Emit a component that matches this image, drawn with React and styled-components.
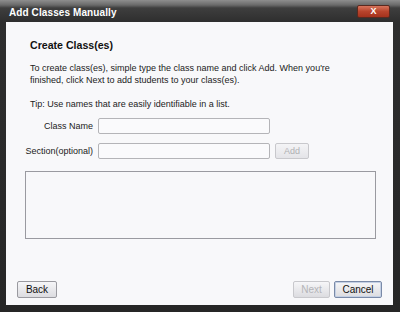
import React from "react";
import styled, { createGlobalStyle } from "styled-components";

const Global = createGlobalStyle`
  html, body { margin: 0; padding: 0; background: #ffffff; }
  body { font-family: "Liberation Sans", Arial, sans-serif; }
`;

const Window = styled.div`
  width: 400px;
  height: 312px;
  box-sizing: border-box;
  display: flex;
  flex-direction: column;
  background: linear-gradient(#8e8e8e 0px, #6a6a6a 5px, #3e3e3e 8px, #2e2e2e 22px, #262626 100%);
  padding: 0 7px 7px 6px;
`;

const TitleBar = styled.div`
  height: 22px;
  display: flex;
  align-items: center;
  justify-content: space-between;
  padding: 2px 3px 0 3px;
  box-sizing: border-box;
`;

const Title = styled.span`
  color: #ffffff;
  font-weight: bold;
  font-size: 10px;
  letter-spacing: 0.1px;
`;

const CloseButton = styled.div`
  width: 33px;
  height: 13px;
  margin-top: -2px;
  box-sizing: border-box;
  border: 1px solid #5a2a20;
  border-radius: 2px;
  background: linear-gradient(#d7745c, #b8442c 50%, #a5321d);
  display: flex;
  align-items: center;
  justify-content: center;
  color: #ffffff;
  font-size: 9px;
  font-weight: bold;
`;

const Content = styled.div`
  flex: 1;
  background: #f8f8fa;
  display: flex;
  flex-direction: column;
  padding: 16px 11px 6px 19px;
  box-sizing: border-box;
`;

const Heading = styled.h1`
  margin: 0 0 0 5px;
  font-size: 10.6px;
  line-height: 14px;
  font-weight: bold;
  color: #111111;
`;

const Paragraph = styled.p`
  margin: ${(p) => p.$top}px 0 0 5px;
  font-size: 9px;
  line-height: 12px;
  color: #222222;
`;

const FormRow = styled.div`
  display: flex;
  align-items: center;
  margin-top: ${(p) => p.$top}px;
  height: 16px;
`;

const Label = styled.label`
  width: 68px;
  text-align: right;
  font-size: 9px;
  color: #222222;
  margin-right: 5px;
  white-space: nowrap;
`;

const TextInput = styled.div`
  width: 172px;
  height: 16px;
  box-sizing: border-box;
  border: 1px solid #b4b4b8;
  border-radius: 2px;
  background: #fafafc;
`;

const SmallButton = styled.div`
  width: 34px;
  height: 16px;
  margin-left: 5px;
  box-sizing: border-box;
  border: 1px solid #c8c8cc;
  border-radius: 2px;
  background: linear-gradient(#f4f4f6, #e4e4e8);
  color: #b0b0b4;
  font-size: 9px;
  display: flex;
  align-items: center;
  justify-content: center;
`;

const ListBox = styled.div`
  margin: 12px 0 0 0;
  width: 351px;
  height: 68px;
  box-sizing: border-box;
  border: 1px solid #9a9aa0;
  background: #f8f8fa;
`;

const Footer = styled.div`
  margin-top: auto;
  display: flex;
  align-items: center;
  margin-left: -8px;
  margin-bottom: 1px;
`;

const Spacer = styled.div`
  flex: 1;
`;

const Button = styled.div`
  width: ${(p) => p.$w}px;
  height: 17px;
  box-sizing: border-box;
  margin-left: ${(p) => p.$ml || 0}px;
  border: 1px solid ${(p) => (p.$focus ? "#7a8aa8" : p.$disabled ? "#c8c8cc" : "#9a9aa0")};
  border-radius: 2px;
  background: linear-gradient(#f6f6f8, #dcdce0);
  color: ${(p) => (p.$disabled ? "#b4b4b8" : "#111111")};
  font-size: 10px;
  display: flex;
  align-items: center;
  justify-content: center;
  box-shadow: ${(p) => (p.$focus ? "inset 0 0 0 1px #c4d0e4" : "none")};
`;

export default function App() {
  return (
    <>
      <Global />
      <Window>
        <TitleBar>
          <Title>Add Classes Manually</Title>
          <CloseButton>X</CloseButton>
        </TitleBar>
        <Content>
          <Heading>Create Class(es)</Heading>
          <Paragraph $top={10}>
            To create class(es), simple type the class name and click Add. When you're
            <br />
            finished, click Next to add students to your class(es).
          </Paragraph>
          <Paragraph $top={12}>Tip: Use names that are easily identifiable in a list.</Paragraph>
          <FormRow $top={8}>
            <Label>Class Name</Label>
            <TextInput />
          </FormRow>
          <FormRow $top={9}>
            <Label>Section(optional)</Label>
            <TextInput />
            <SmallButton>Add</SmallButton>
          </FormRow>
          <ListBox />
          <Footer>
            <Button $w={40}>Back</Button>
            <Spacer />
            <Button $w={37} $disabled>Next</Button>
            <Button $w={48} $ml={4} $focus>Cancel</Button>
          </Footer>
        </Content>
      </Window>
    </>
  );
}
